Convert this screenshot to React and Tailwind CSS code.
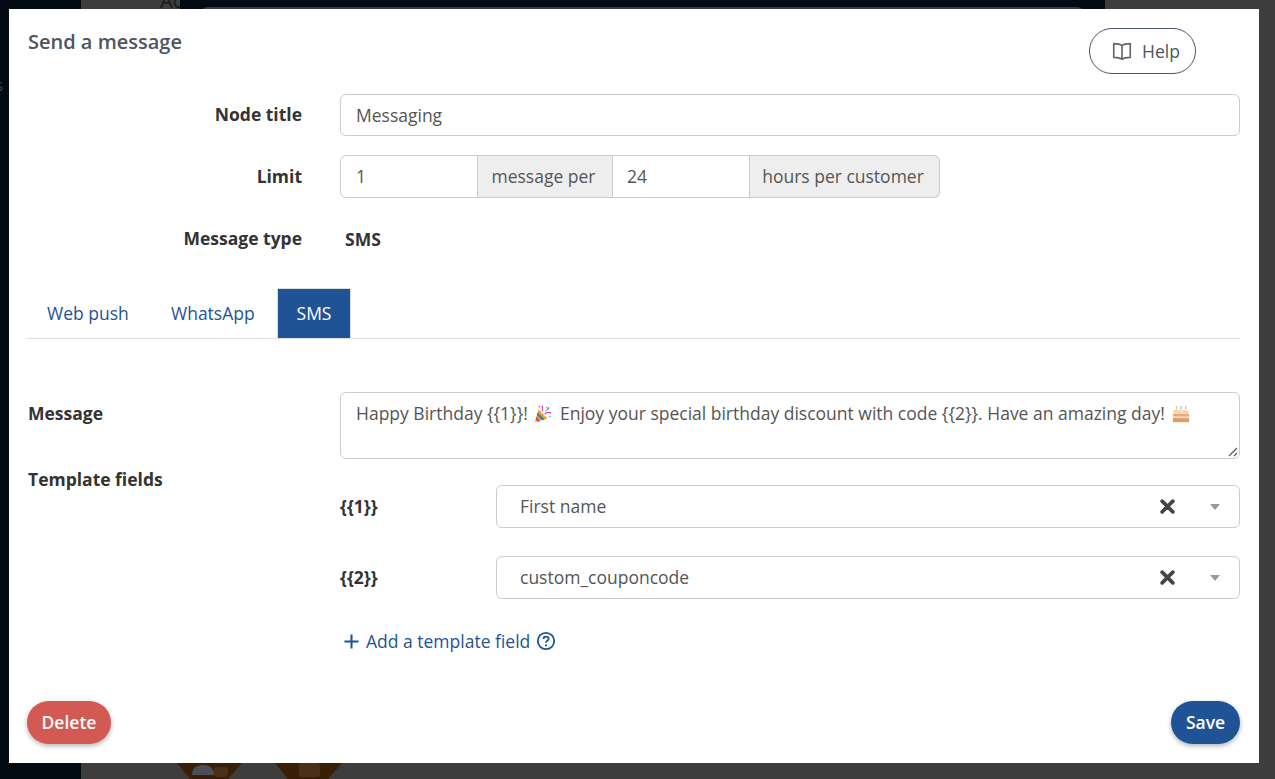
import React from "react";

const Party = () => (
  <svg viewBox="0 0 20 20" className="inline-block w-[18px] h-[18px] align-[-3px] ml-[2px] mr-[3px]">
    <path d="M5 5 L15 15 L1 19 Z" fill="#f0a030" />
    <path d="M4 8 L12 16 L9 17 L3 11 Z" fill="#4a7fc0" />
    <path d="M2.5 13 L7 18 L4 18.6 L2 16 Z" fill="#d9503f" />
    <path d="M9 7 C10 5 10 3 9 1" stroke="#e0409a" strokeWidth="1.4" fill="none" />
    <path d="M12 10 C14 8 17 8 19 9" stroke="#e0409a" strokeWidth="1.4" fill="none" />
    <path d="M12 8 L16 2 L17.5 3.5 Z" fill="#3ea8dc" />
    <rect x="5" y="1" width="1.6" height="1.6" fill="#e0409a" />
    <rect x="17" y="12" width="1.6" height="1.6" fill="#3ea8dc" />
    <rect x="13" y="2" width="1.6" height="1.6" fill="#f0a030" />
  </svg>
);

const Cake = () => (
  <svg viewBox="0 0 20 20" className="inline-block w-[18px] h-[18px] align-[-3px] ml-[3px]">
    <rect x="4.2" y="1" width="1.2" height="4" fill="#e8b84a" />
    <rect x="9.4" y="1" width="1.2" height="4" fill="#7cc0e0" />
    <rect x="14.6" y="1" width="1.2" height="4" fill="#e8b84a" />
    <path d="M1 8 Q1 5 4 5 H16 Q19 5 19 8 V10 H1 Z" fill="#f6e3c0" />
    <rect x="1" y="10" width="18" height="3" fill="#eca878" />
    <rect x="1" y="13" width="18" height="1.6" fill="#f7d8b8" />
    <rect x="1" y="14.6" width="18" height="4.4" fill="#e59a66" />
    <rect x="4" y="7" width="1" height="1" fill="#e060a0" />
    <rect x="8" y="8" width="1" height="1" fill="#50a0d8" />
    <rect x="13" y="7" width="1" height="1" fill="#e060a0" />
    <rect x="16" y="8" width="1" height="1" fill="#50a0d8" />
  </svg>
);

const Field = ({ label, value, mb }) => (
  <div className={`flex items-center ${mb}`}>
    <div className="w-[156px] font-bold text-[#333333]">{label}</div>
    <div className="flex-1 h-[43px] flex items-center bg-white border border-[#cccccc] rounded-[6px] pl-[23px] pr-[19px] text-[#555555]">
      <span className="flex-1">{value}</span>
      <svg viewBox="0 0 14 14" className="w-[15px] h-[15px] mr-[35px]">
        <path d="M2 2 L12 12 M12 2 L2 12" stroke="#444444" strokeWidth="3.4" strokeLinecap="round" fill="none" />
      </svg>
      <span className="w-0 h-0 border-x-[5px] border-x-transparent border-t-[6px] border-t-[#999999]"></span>
    </div>
  </div>
);

export default function App() {
  return (
    <div className="relative h-[779px] w-[1275px] overflow-hidden bg-[#3d3d3d] font-['Open_Sans',sans-serif] text-[17.5px]">
      {/* dimmed page behind the modal */}
      <div className="absolute left-0 top-0 h-full w-[81px] bg-[#020b14] text-[#3c444c]">
        <span className="absolute left-[-5px] top-[72px] text-[17px]">s</span>
      </div>
      <div className="absolute left-[81px] top-0 h-[12px] w-[99px] bg-[#3d3d3d] text-[#1a1a1a]">
        <span className="absolute left-[79px] top-[-14px] text-[20px]">Ac</span>
      </div>
      <div className="absolute left-[180px] top-0 h-[12px] w-[925px] bg-[#020b14]">
        <div className="absolute left-[20px] top-[7px] h-[10px] w-[885px] rounded-t-[8px] bg-[#3a3d40]"></div>
      </div>
      <svg viewBox="0 0 220 16" className="absolute left-[150px] top-[763px] w-[220px] h-[16px]">
        <path d="M27 0 H92 L78 16 H40 Z" fill="#3a1f08" />
        <path d="M125 0 H192 L178 16 H138 Z" fill="#3a1f08" />
        <path d="M42 12 Q42 2 53 2 Q64 2 64 12 Z" fill="#4a4f55" />
        <rect x="64" y="4" width="14" height="10" rx="3" fill="#4a3018" />
        <rect x="149" y="0" width="21" height="14" rx="3" fill="#4a3018" />
      </svg>

      {/* modal */}
      <div className="absolute left-[9px] top-[9px] h-[754px] w-[1250px] bg-white pl-[18px] pr-[19px] text-[#333333] flex flex-col">
        <div className="flex justify-between h-[85px]">
          <div className="pl-[1px] pt-[18px] text-[20px] leading-[30px] font-semibold text-[#4b5563]">Send a message</div>
          <button className="mt-[19px] mr-[44px] h-[46px] w-[107px] pl-[6px] flex items-center justify-center gap-[9px] rounded-full border border-[#4b5563] text-[#4b5563] text-[17.5px]">
            <svg viewBox="0 0 24 24" className="w-[22px] h-[22px]" fill="none" stroke="#666666" strokeWidth="1.8" strokeLinejoin="round">
              <path d="M12 6 C10 4.5 7 4 3 4 V19 C7 19 10 19.5 12 21 C14 19.5 17 19 21 19 V4 C17 4 14 4.5 12 6 Z M12 6 V21" />
            </svg>
            Help
          </button>
        </div>

        <div className="flex items-center">
          <div className="w-[275px] text-right font-bold pb-[2px]">Node title</div>
          <div className="ml-[38px] flex-1 h-[42px] flex items-center border border-[#cccccc] rounded-[6px] pl-[15px] text-[#555555]">Messaging</div>
        </div>

        <div className="flex items-center mt-[19px]">
          <div className="w-[275px] text-right font-bold">Limit</div>
          <div className="ml-[38px] flex h-[43px] w-[600px] text-[#555555]">
            <div className="w-[138px] flex items-center border border-[#cccccc] rounded-l-[6px] pl-[15px]">1</div>
            <div className="w-[134px] pr-[3px] flex items-center justify-center bg-[#eeeeee] border-y border-[#cccccc]">message per</div>
            <div className="w-[138px] flex items-center border border-[#cccccc] pl-[14px]">24</div>
            <div className="flex-1 pr-[3px] flex items-center justify-center bg-[#eeeeee] border-y border-r border-[#cccccc] rounded-r-[6px]">hours per customer</div>
          </div>
        </div>

        <div className="flex items-center mt-[19px] h-[43px]">
          <div className="w-[275px] text-right font-bold">Message type</div>
          <div className="ml-[43px] pt-[2px] font-bold">SMS</div>
        </div>

        <div className="mt-[28px] flex h-[51px] border-b border-[#dddddd] text-[#1f5396]">
          <div className="flex items-center pl-[20px] w-[144px]">Web push</div>
          <div className="flex items-center w-[106px]">WhatsApp</div>
          <div className="flex items-center justify-center w-[74px] h-[51px] bg-[#1f5396] border border-[#dddddd] text-white">SMS</div>
        </div>

        <div className="flex mt-[53px]">
          <div className="w-[313px] pl-[1px] font-bold leading-[23px] pt-[10px]">Message</div>
          <div className="relative flex-1 h-[67px] border border-[#cccccc] rounded-[6px] pl-[15px] pt-[6px] leading-[28px] text-[#555555] whitespace-nowrap">
            Happy Birthday {"{{1}}"}! <Party /> Enjoy your special birthday discount with code {"{{2}}"}. Have an amazing day! <Cake />
            <svg viewBox="0 0 10 10" className="absolute right-[1px] bottom-[1px] w-[10px] h-[10px]" stroke="#555555" strokeWidth="1.2">
              <path d="M1 9 L9 1 M6 9 L9 6" />
            </svg>
          </div>
        </div>

        <div className="flex mt-[26px]">
          <div className="w-[313px] pl-[1px] font-bold leading-[23px] mt-[-17px]">Template fields</div>
          <div className="flex-1">
            <Field label="{{1}}" value="First name" mb="mb-[28px]" />
            <Field label="{{2}}" value="custom_couponcode" mb="" />
            <div className="mt-[29px] pl-[3px] flex items-center text-[#1f5396]">
              <svg viewBox="0 0 18 18" className="w-[17px] h-[17px] mr-[6px]" stroke="#1f5396" strokeWidth="2.2" fill="none">
                <path d="M9 1.5 V16.5 M1.5 9 H16.5" />
              </svg>
              Add a template field
              <svg viewBox="0 0 20 20" className="w-[20px] h-[20px] ml-[6px]" fill="none" stroke="#1f5396">
                <circle cx="10" cy="10" r="8.2" strokeWidth="1.8" />
                <path d="M7.5 8 Q7.5 5.6 10 5.6 Q12.6 5.6 12.6 7.8 Q12.6 9.2 11 10 Q10 10.6 10 11.8" strokeWidth="1.8" />
                <circle cx="10" cy="14.3" r="1.1" fill="#1f5396" stroke="none" />
              </svg>
            </div>
          </div>
        </div>

        <div className="mt-auto mb-[19px] flex justify-between">
          <button className="h-[43px] w-[84px] rounded-full bg-[#d35a52] text-white font-semibold shadow-[0_2px_5px_rgba(0,0,0,0.3)]">Delete</button>
          <button className="h-[43px] w-[69px] rounded-full bg-[#1f5396] text-white font-semibold shadow-[0_2px_5px_rgba(0,0,0,0.3)]">Save</button>
        </div>
      </div>
    </div>
  );
}
